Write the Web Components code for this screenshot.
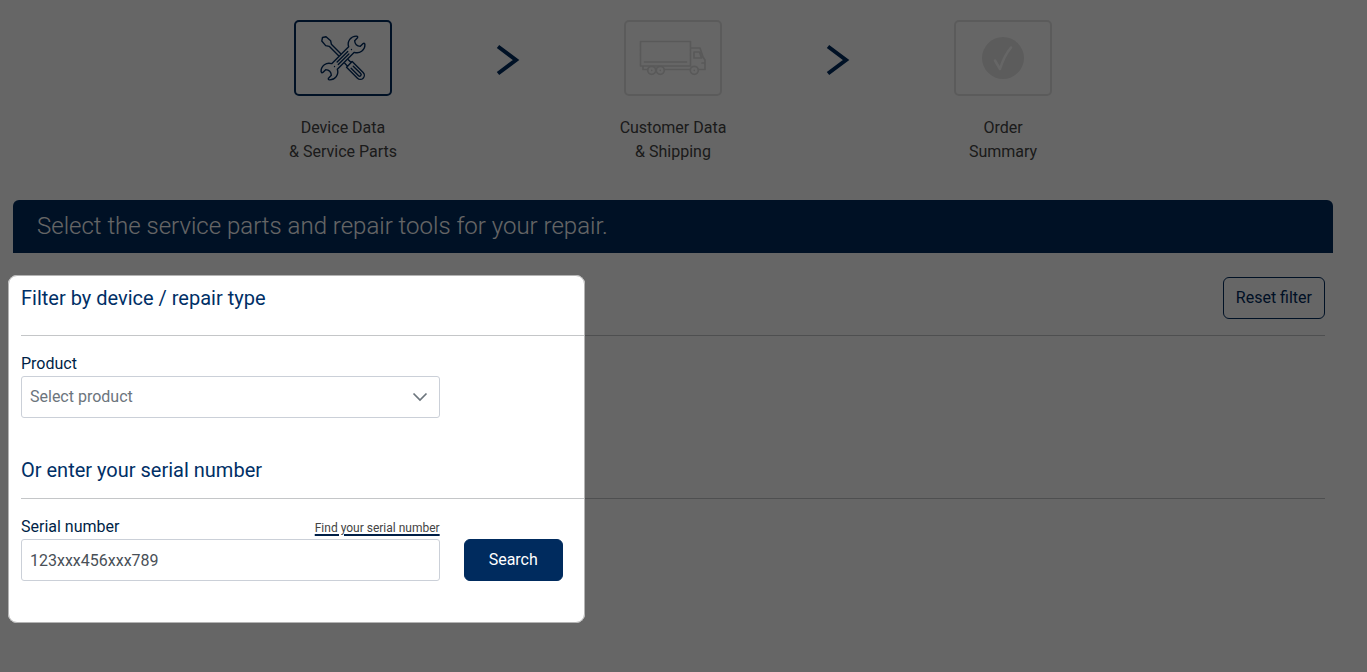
<!DOCTYPE html>
<html lang="en">
<head>
<meta charset="utf-8">
<title>Service parts order</title>
<style>
  body {
    margin: 0;
    min-height: 100vh;
    background: #fff;
    color: #444;
    font: 400 16px/24px Roboto, "Liberation Sans", sans-serif;
    overflow-x: hidden;
    --navy: #002b5e;
    --line: #c4c6c8;
    --muted: #e4e4e4;
  }
</style>
</head>
<body>
<repair-page></repair-page>
<script>
const define = (name, html) => {
  const template = document.createElement('template');
  template.innerHTML = html;
  customElements.define(name, class extends HTMLElement {
    constructor() {
      super();
      this.attachShadow({ mode: 'open' }).append(template.content.cloneNode(true));
    }
  });
};

define('order-step', `
  <style>
    :host { display: flex; flex-direction: column; align-items: center; gap: 20px; text-align: center; white-space: nowrap; color: #444; }
    .frame { box-sizing: border-box; width: 98px; height: 76px; border: 2px solid var(--muted); border-radius: 5px; color: #dedede; }
    :host([active]) .frame { border-color: var(--navy); color: var(--navy); }
  </style>
  <div class="frame"><slot name="icon"></slot></div>
  <div><slot></slot></div>
`);

define('step-arrow', `
  <style>
    :host { display: flex; justify-content: center; padding-top: 24px; color: var(--navy); }
    svg { display: block; }
  </style>
  <svg width="24" height="32" viewBox="0 0 24 32" fill="none" stroke="currentColor" stroke-width="4" aria-hidden="true"><path d="M2 2.500L20 16L2 29.500"/></svg>
`);

define('order-steps', `
  <style>
    :host { display: grid; grid-template-columns: repeat(5, 12.5%); justify-content: center; }
    svg { display: block; fill: none; stroke: currentColor; stroke-linecap: round; stroke-linejoin: round; }
  </style>
  <order-step active>
    <svg slot="icon" width="94" height="72" viewBox="0 0 94 72" stroke-width="1.400" aria-hidden="true">
      <g transform="translate(47 36) rotate(45)">
        <path d="M-5-1.500H-18L-21-3.500L-27-3L-29 0L-27 3L-21 3.500L-18 1.500H-5"/>
        <path d="M5-2.500H9V2.500H5M9-4H24.500A4 4 0 0 1 24.500 4H9ZM13-1.500H23.500A1.500 1.500 0 0 1 23.500 1.500H13"/>
      </g>
      <g transform="translate(47 36) rotate(-45)">
        <path d="M-12-4H12A8 8 0 0 1 25-6Q26-4.500 24.500-4H20.500Q17 0 20.500 4H24.500Q26 4.500 25 6A8 8 0 0 1 12 4H-12A8 8 0 0 1-25 6Q-26 4.500-24.500 4H-20.500Q-17 0-20.500-4H-24.500Q-26-4.500-25-6A8 8 0 0 1-12-4Z"/>
        <path d="M-7-1.300H8M-8 1.300H7M-12 0h0M12 0h0"/>
      </g>
    </svg>
    Device Data<br>&amp; Service Parts
  </order-step>
  <step-arrow></step-arrow>
  <order-step>
    <svg slot="icon" width="94" height="72" viewBox="0 0 94 72" stroke-width="1.700" aria-hidden="true">
      <path d="M14.500 44V19.500H64.500V44ZM18.500 40H60.500M64.500 26H74L77 35L79 38V47.500H72.500M68 30H73.500L75.500 36H68ZM76 41H79M17 44V47.500H21.500M38.500 47.500H64M64.500 44H59"/>
      <circle cx="25.700" cy="48.300" r="4"/><circle cx="34.300" cy="48.300" r="4"/><circle cx="68.300" cy="48.300" r="4"/>
      <path d="M25.700 48.300h0M34.300 48.300h0M68.300 48.300h0"/>
    </svg>
    Customer Data<br>&amp; Shipping
  </order-step>
  <step-arrow></step-arrow>
  <order-step>
    <svg slot="icon" width="94" height="72" viewBox="0 0 94 72" aria-hidden="true">
      <circle cx="47" cy="36" r="21" fill="#e6e6e6" stroke="none"/>
      <path d="M39 38.500L44 47Q48 34 55 25.500" stroke="#fff" stroke-width="2.500"/>
    </svg>
    Order<br>Summary
  </order-step>
`);

define('page-banner', `
  <style>
    :host { display: block; background: var(--navy); color: #fff; border-radius: 6px 6px 0 0; }
    h1 { margin: 0; padding: 10px 24px 11px; font-size: 24px; line-height: 32px; font-weight: 300; }
  </style>
  <h1><slot></slot></h1>
`);

define('section-heading', `
  <style>
    :host { display: flex; align-items: center; justify-content: space-between; padding-bottom: 16px; border-bottom: 1px solid var(--line); margin-bottom: 16px; }
    h2 { margin: 0; font-size: 20px; line-height: 24px; font-weight: 400; color: #002f66; }
  </style>
  <h2><slot></slot></h2><slot name="action"></slot>
`);

define('action-button', `
  <style>
    :host { display: block; }
    button { display: block; box-sizing: border-box; height: 42px; padding: 0 12px; border: 1px solid var(--navy); border-radius: 6px; background: #fff; color: var(--navy); font: inherit; cursor: pointer; }
    :host([primary]) button { padding: 0 24px; background: var(--navy); color: #fff; }
  </style>
  <button type="button"><slot></slot></button>
`);

define('product-field', `
  <style>
    :host { display: block; }
    label { display: block; color: #001f47; }
    .control { display: grid; align-items: center; }
    select, svg { grid-area: 1 / 1; }
    select { appearance: none; box-sizing: border-box; width: 100%; height: 42px; padding: 0 32px 0 8px; border: 1px solid #cbd0d8; border-radius: 3px; background: #fff; color: #6c757d; font: inherit; }
    svg { justify-self: end; margin-right: 12px; pointer-events: none; }
  </style>
  <label for="product">Product</label>
  <div class="control">
    <select id="product"><option>Select product</option></select>
    <svg width="16" height="16" viewBox="0 0 16 16" fill="none" stroke="#6c757d" stroke-width="1.700" aria-hidden="true"><path d="M1.500 4.500L8 11L14.500 4.500"/></svg>
  </div>
`);

define('serial-field', `
  <style>
    :host { display: block; }
    .top { display: flex; justify-content: space-between; align-items: baseline; }
    label { color: #001f47; }
    a { color: #444; font-size: 12px; line-height: 16px; text-decoration: underline 2px #001f47; text-underline-offset: 2px; }
    input { display: block; box-sizing: border-box; width: 100%; height: 42px; padding: 0 8px; border: 1px solid #cbd0d8; border-radius: 3px; background: #fff; font: inherit; }
    input, input::placeholder { color: #495057; opacity: 1; }
  </style>
  <div class="top"><label for="serial">Serial number</label><a href="#serial-help">Find your serial number</a></div>
  <input id="serial" type="text" placeholder="123xxx456xxx789">
`);

define('tour-spotlight', `
  <style>
    :host { position: absolute; box-sizing: border-box; border: 1px solid #b4b4b4; border-radius: 9px; box-shadow: 0 0 0 4000px rgba(0, 0, 0, .6); pointer-events: none; }
  </style>
`);

define('device-filter', `
  <style>
    :host { display: block; position: relative; }
    .row { display: grid; grid-template-columns: repeat(3, 1fr); column-gap: 24px; align-items: end; justify-items: start; }
    .row > :first-child { justify-self: stretch; }
    .row + section-heading { margin-top: 40px; }
    tour-spotlight { top: -2px; left: -13px; bottom: -42px; width: calc((100% - 48px) / 3 + 158px); }
  </style>
  <section-heading>Filter by device / repair type<action-button slot="action">Reset filter</action-button></section-heading>
  <div class="row"><product-field></product-field></div>
  <section-heading>Or enter your serial number</section-heading>
  <div class="row"><serial-field></serial-field><action-button primary>Search</action-button></div>
  <tour-spotlight></tour-spotlight>
`);

define('repair-page', `
  <style>
    :host { display: block; padding: 20px 34px 42px 13px; }
    page-banner { margin-top: 36px; }
    device-filter { margin: 24px 8px 0; }
  </style>
  <order-steps></order-steps>
  <page-banner>Select the service parts and repair tools for your repair.</page-banner>
  <device-filter></device-filter>
`);
</script>
</body>
</html>
